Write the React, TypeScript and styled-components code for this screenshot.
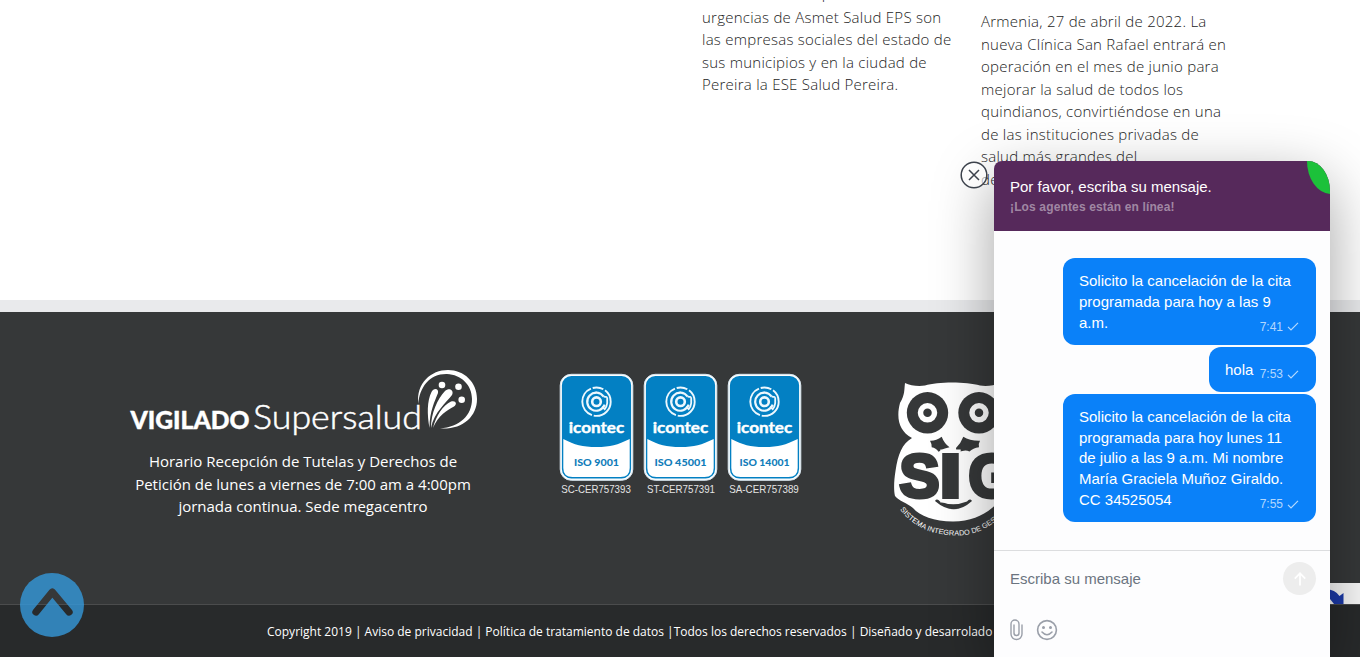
import React from 'react';
import styled, { createGlobalStyle } from 'styled-components';

const Global = createGlobalStyle`
  * { box-sizing: border-box; }
  html, body { margin: 0; height: 657px; overflow: hidden; background: #fff; }
`;

const Page = styled.div`
  position: relative;
  display: flex;
  flex-direction: column;
  width: 1360px;
  height: 657px;
  overflow: hidden;
  font-family: 'Open Sans', sans-serif;
`;

const News = styled.main`
  display: flex;
  gap: 29px;
  height: 300px;
  padding-left: 702px;
  overflow: hidden;
`;

const Article = styled.p<{ $shift: number }>`
  width: 250px;
  margin: ${p => p.$shift}px 0 0;
  font-size: 15px;
  font-weight: 300;
  line-height: 22.5px;
  letter-spacing: 0.25px;
  color: #1c1c1c;
  white-space: nowrap;
`;

const LeadLine = styled.span`
  display: block;
  margin-bottom: 1px;
`;

const Band = styled.div`
  height: 12px;
  background: #e9eaec;
`;

const Footer = styled.footer`
  display: flex;
  align-items: flex-start;
  height: 292px;
  background: #363839;
`;

const Supervised = styled.section`
  width: 350px;
  margin: 56px 0 0 128px;
  text-align: center;
  svg { display: block; }
`;

const Hours = styled.p`
  margin: 12px 0 0;
  font-size: 15px;
  line-height: 22.5px;
  color: #fff;
  white-space: nowrap;
`;

const Certificates = styled.section`
  display: flex;
  gap: 6px;
  margin: 60px 0 0 79px;
`;

const OwlBox = styled.section`
  margin: 62px 0 0 87px;
`;

const Legal = styled.div`
  height: 53px;
  padding-left: 267px;
  border-top: 1px solid #4b4c4d;
  background: #282a2b;
  font-size: 12px;
  line-height: 53px;
  color: #fff;
  white-space: pre;
`;

const TopButton = styled.div`
  position: absolute;
  left: 20px;
  top: 573px;
  width: 64px;
  height: 64px;
  svg { display: block; }
`;

const Recaptcha = styled.div`
  position: absolute;
  right: 0;
  top: 583px;
  width: 70px;
  height: 21px;
  overflow: hidden;
  background: #f9f9f9;
  svg { display: block; }
`;

const Chat = styled.aside`
  position: absolute;
  left: 994px;
  top: 161px;
  display: flex;
  flex-direction: column;
  width: 336px;
  height: 496px;
  border-radius: 8px 24px 0 0 / 8px 31px 0 0;
  background: #fdfdfe;
  box-shadow: 0 19px 60px rgba(0, 0, 0, 0.37);
  font-family: 'Liberation Sans', Arial, sans-serif;
`;

const CloseButton = styled.div`
  position: absolute;
  left: 960px;
  top: 161px;
  width: 28px;
  height: 28px;
  svg { display: block; }
`;

const ChatHeader = styled.header`
  position: relative;
  height: 70px;
  padding: 16px 16px 0;
  border-radius: 8px 22px 0 0 / 8px 30px 0 0;
  background: #56295b;
  color: #fff;
  overflow: hidden;
`;

const ChatTitle = styled.div`
  font-size: 15px;
  line-height: 19px;
`;

const ChatStatus = styled.div`
  font-size: 12px;
  font-weight: 700;
  line-height: 22px;
  letter-spacing: 0.14px;
  color: rgba(255, 255, 255, 0.45);
`;

const Leaf = styled.svg`
  position: absolute;
  right: 0;
  top: 0;
`;

const Messages = styled.div`
  display: flex;
  flex-direction: column;
  align-items: flex-end;
  gap: 2px;
  height: 320px;
  padding: 27px 14px 0 0;
  border-bottom: 1px solid #dcdddf;
`;

const Bubble = styled.div<{ $short?: boolean }>`
  display: flex;
  justify-content: space-between;
  align-items: flex-end;
  flex-shrink: 0;
  width: ${p => (p.$short ? 107 : 253)}px;
  padding: 13px 16px 11.4px;
  border-radius: 12px;
  background: #0a81f9;
  color: #fff;
  font-size: 15px;
  line-height: 20.75px;
  white-space: nowrap;
`;

const Words = styled.div`
  width: 0;
`;

const Stamp = styled.span`
  display: flex;
  align-items: center;
  gap: 4px;
  margin: 0 1px -4px 0;
  font-size: 12px;
  color: rgba(255, 255, 255, 0.7);
`;

const Composer = styled.div`
  display: flex;
  justify-content: space-between;
  align-items: center;
  height: 55px;
  padding: 0 14px 0 16px;
  font-size: 15px;
  color: #6b7480;
`;

const Send = styled.span`
  display: flex;
  align-items: center;
  justify-content: center;
  width: 33px;
  height: 33px;
  border-radius: 50%;
  background: #ededed;
`;

const Tools = styled.div`
  display: flex;
  align-items: center;
  gap: 12.5px;
  padding: 12.5px 16px;
`;

const certificates = [
  { iso: 'ISO 9001', code: 'SC-CER757393', w: 45 },
  { iso: 'ISO 45001', code: 'ST-CER757391', w: 52 },
  { iso: 'ISO 14001', code: 'SA-CER757389', w: 50 },
];

function Certificate({ iso, code, w }: { iso: string; code: string; w: number }) {
  return (
    <svg width="78" height="124" viewBox="0 0 78 124">
      <rect x="3.2" y="2.3" width="72.6" height="106" rx="11" fill="#fff" stroke="#d8e6ef" strokeWidth="1" />
      <rect x="4.9" y="4" width="69.2" height="102.600" rx="9.5" fill="#0380c3" />
      <path d="M6.3 67 C18 73 25 75 39.500 75 S60 73 72.700 67 V96 Q72.700 105 63.500 105 H15.500 Q6.3 105 6.3 96 Z" fill="#fff" />
      <g fill="none" stroke="#eef8fe" strokeWidth="2.2">
        <circle cx="39.5" cy="29.700" r="4.3" strokeWidth="2.6" />
        <path d="M46.700 24.700 A9 9 0 1 0 47.700 32.700 M36.200 21.300 A9 9 0 0 1 43.200 21.500" />
        <path d="M50.200 25.200 V31.200 A11.5 11.5 0 0 1 47.700 37.200 L45 34.700 M46.700 24.700 L50.200 25.200" strokeWidth="1.8" />
        <circle cx="39.5" cy="29.700" r="14.2" strokeDasharray="25 1.8 34 1.8 11 2" strokeWidth="1.9" />
      </g>
      <text x="11.7" y="61" textLength="55.500" lengthAdjust="spacingAndGlyphs" fontFamily="Lato, sans-serif" fontWeight="700" fontSize="15" fill="#fff" stroke="#fff" strokeWidth="0.4">icontec</text>
      <text x={39.5 - w / 2} y="93.500" textLength={w} lengthAdjust="spacingAndGlyphs" fontFamily="Lato, sans-serif" fontWeight="900" fontSize="10" fill="#127dba">{iso}</text>
      <text x={code[1] === 'T' ? 6 : 4.300} y="121" textLength={code[1] === 'T' ? 68 : 69.5} lengthAdjust="spacingAndGlyphs" fontFamily="'Liberation Sans', Arial, sans-serif" fontSize="10.500" fill="#e4e4e4">{code}</text>
    </svg>
  );
}

function SupersaludLogo() {
  return (
    <svg width="350" height="70" viewBox="0 0 350 70">
      <text x="2.500" y="60.500" textLength="119" lengthAdjust="spacingAndGlyphs" fontFamily="Lato, sans-serif" fontWeight="900" fontSize="25" fill="#fff" stroke="#fff" strokeWidth="0.4">VIGILADO</text>
      <text x="125" y="60.500" textLength="169" lengthAdjust="spacingAndGlyphs" fontFamily="Lato, sans-serif" fontWeight="300" fontSize="33" fill="#fff" stroke="#fff" strokeWidth="0.5">Supersalud</text>
      <g fill="#fff">
        <path d="M290.300 36 C288 15 303 2 320 2 C336 2 349 14 349 31 C349 49 334 62 312 60.5 C332 59 344 47 344 31 C344 17 333 6.5 319 6 C302 5.5 291.500 19 290.300 36 Z" />
        <path d="M301.500 60 C299 46 299 33 303.500 24 C305.500 19.500 311 20 310 25 C307 33 301.500 43 301.500 60 Z" />
        <path d="M303 60 C303 45 309.500 31 317 23 C321 19 326.500 22 324 27 C319 34 306 44 303 60 Z" />
        <path d="M305 60 C308 48 315 37 323 33.500 C328 32 329.500 36 326 38.500 C319 42 310 48 305 60 Z" />
        <circle cx="314" cy="17" r="3.300" />
        <circle cx="330.500" cy="18.700" r="3.300" />
        <circle cx="333.700" cy="31.800" r="3.300" />
      </g>
    </svg>
  );
}

function Owl() {
  return (
    <svg width="150" height="170" viewBox="0 0 150 170">
      <path d="M15 9 C20 11.500 28 12.500 35 11.500 C48 7.500 76 7.500 90 11.500 C97 12.500 104 11.500 110 9 C111 17 109 20 112 29 C117 44 112 55 104 64 C112 70 117 80 119.500 97 C124 108 122 118 119 123 C110 127 106 131 102 134 C92 142 80 147.500 63 147.500 C44 147.500 30 142 23 134 C17 129 9 127 5 122 C3.500 116 4 106 5.500 97 C8 80 12 70 22 64 C9 57 6 44 10 29 C15 20 14 17 15 9 Z" fill="#fff" />
      <g fill="#363839">
        <circle cx="37.500" cy="38.800" r="20.700" />
        <circle cx="89" cy="38.800" r="20.700" />
        <path d="M40 66.700 Q46 67 51.700 62.700 Q54 69 59.500 73.300 Q54 74 48.500 77.700 Q46 74 41.700 73.300 Q42 70 40 66.700 Z" />
        <path d="M66 74 Q71 69 73.300 62.700 Q80 67 90 66.700 Q88 70 89 73.300 Q83 74 79.500 77.500 Q74 75 66.700 79.500 Z" />
        <path d="M45 127 Q47 124 50 127.500 Q63 133 77 127.500 Q80 124 82 127 Q64 143.500 45 127 Z" />
      </g>
      <g fill="none" stroke="#fff" strokeWidth="5.500">
        <circle cx="37.500" cy="38.800" r="7" />
        <circle cx="89" cy="38.800" r="7" />
      </g>
      <g fontFamily="'Liberation Sans', Arial, sans-serif" fontWeight="700" fontSize="62" fill="#363839" stroke="#363839" strokeWidth="4">
        <text x="9.500" y="123.300" textLength="40" lengthAdjust="spacingAndGlyphs">S</text>
        <text x="78.500" y="123.300" textLength="46" lengthAdjust="spacingAndGlyphs">G</text>
        <rect x="50.300" y="75.500" width="20.400" height="53" fill="#fff" stroke="none" />
        <text x="49.500" y="123.300" textLength="22" lengthAdjust="spacingAndGlyphs">I</text>
      </g>
      <path id="motto" d="M10 135.500 C25 155 45 161.500 68 161.500 C88 161.500 105 150 120 134" fill="none" />
      <text fontFamily="'Liberation Sans', Arial, sans-serif" fontSize="7.300" fill="#fff">
        <textPath href="#motto" textLength="126">SISTEMA INTEGRADO DE GESTIÓN</textPath>
      </text>
    </svg>
  );
}

function Time({ children }: { children: string }) {
  return (
    <Stamp>
      {children}
      <svg width="12" height="9" viewBox="0 0 12 9" fill="none" stroke="currentColor" strokeWidth="1.2">
        <path d="M1 4.800 L4 7.800 L11 0.800" />
      </svg>
    </Stamp>
  );
}

export default function App() {
  return (
    <Page>
      <Global />
      <News>
        <Article $shift={-18}>
          <LeadLine>Las instituciones prestadoras</LeadLine>
          urgencias de Asmet Salud EPS son<br />
          las empresas sociales del estado de<br />
          sus municipios y en la ciudad de<br />
          Pereira la ESE Salud Pereira.
        </Article>
        <Article $shift={10}>
          Armenia, 27 de abril de 2022. La<br />
          nueva Clínica San Rafael entrará en<br />
          operación en el mes de junio para<br />
          mejorar la salud de todos los<br />
          quindianos, convirtiéndose en una<br />
          de las instituciones privadas de<br />
          salud más grandes del<br />
          departamento.
        </Article>
      </News>
      <Band />
      <Footer>
        <Supervised>
          <SupersaludLogo />
          <Hours>
            Horario Recepción de Tutelas y Derechos de<br />
            Petición de lunes a viernes de 7:00 am a 4:00pm<br />
            jornada continua. Sede megacentro
          </Hours>
        </Supervised>
        <Certificates>
          {certificates.map(c => <Certificate key={c.iso} {...c} />)}
        </Certificates>
        <OwlBox><Owl /></OwlBox>
      </Footer>
      <Legal>Copyright 2019 | Aviso de privacidad | Política de tratamiento de datos |Todos los derechos reservados | Diseñado y desarrolado</Legal>

      <TopButton>
        <svg width="64" height="64" viewBox="0 0 64 64">
          <defs>
            <mask id="chevron">
              <rect width="64" height="64" fill="#fff" />
              <path d="M16 39 L32.300 19 L49 39" fill="none" stroke="#000" strokeWidth="7.300" strokeLinecap="round" strokeLinejoin="round" />
            </mask>
          </defs>
          <circle cx="32" cy="32" r="32" fill="#3498db" fillOpacity="0.8" mask="url(#chevron)" />
        </svg>
      </TopButton>

      <Recaptcha>
        <svg width="70" height="21" viewBox="0 0 70 21">
          <path d="M36 6 Q45 6.500 49.500 13 L53.500 10 V21 H44 L40 16 H36 Z" fill="#1c3aa9" />
        </svg>
      </Recaptcha>

      <Chat>
        <ChatHeader>
          <ChatTitle>Por favor, escriba su mensaje.</ChatTitle>
          <ChatStatus>¡Los agentes están en línea!</ChatStatus>
          <Leaf width="24" height="34" viewBox="0 0 24 34">
            <path d="M1 0 A24 33 0 0 0 24 33 V0 Z" fill="#1cc13a" />
          </Leaf>
        </ChatHeader>
        <Messages>
          <Bubble>
            <Words>Solicito la cancelación de la cita<br />programada para hoy a las 9<br />a.m.</Words>
            <Time>7:41</Time>
          </Bubble>
          <Bubble $short>
            <Words>hola</Words>
            <Time>7:53</Time>
          </Bubble>
          <Bubble>
            <Words>Solicito la cancelación de la cita<br />programada para hoy lunes 11<br />de julio a las 9 a.m. Mi nombre<br />María Graciela Muñoz Giraldo.<br />CC 34525054</Words>
            <Time>7:55</Time>
          </Bubble>
        </Messages>
        <Composer>
          Escriba su mensaje
          <Send>
            <svg width="14" height="18" viewBox="0 0 16 18" fill="none" stroke="#fff" strokeWidth="2">
              <path d="M8 16.500 V3 M2 8.500 L8 2.500 L14 8.500" />
            </svg>
          </Send>
        </Composer>
        <Tools>
          <svg width="13" height="22" viewBox="0 0 13 22" fill="none" stroke="#9a9fa9" strokeWidth="1.4" strokeLinecap="round">
            <path d="M4 6 V14 A2.500 2.500 0 0 0 9 14 V5 A4 4 0 0 0 1 5 V15 A5.300 5.300 0 0 0 12 15 V6" />
          </svg>
          <svg width="22" height="22" viewBox="0 0 22 22" fill="none" stroke="#9a9fa9" strokeWidth="1.600" strokeLinecap="round">
            <circle cx="11" cy="11" r="9.400" />
            <path d="M6 13 Q11 18.500 16 13" />
            <circle cx="7.500" cy="8.500" r="0.700" fill="#9a9fa9" />
            <circle cx="14.500" cy="8.500" r="0.700" fill="#9a9fa9" />
          </svg>
        </Tools>
      </Chat>
      <CloseButton>
        <svg width="28" height="28" viewBox="0 0 28 28" fill="none" stroke="#3c424c" strokeWidth="1.500">
          <circle cx="14" cy="14" r="12.800" fill="#fff" fillOpacity="0.6" />
          <path d="M9 9 L19 19 M19 9 L9 19" />
        </svg>
      </CloseButton>
    </Page>
  );
}
